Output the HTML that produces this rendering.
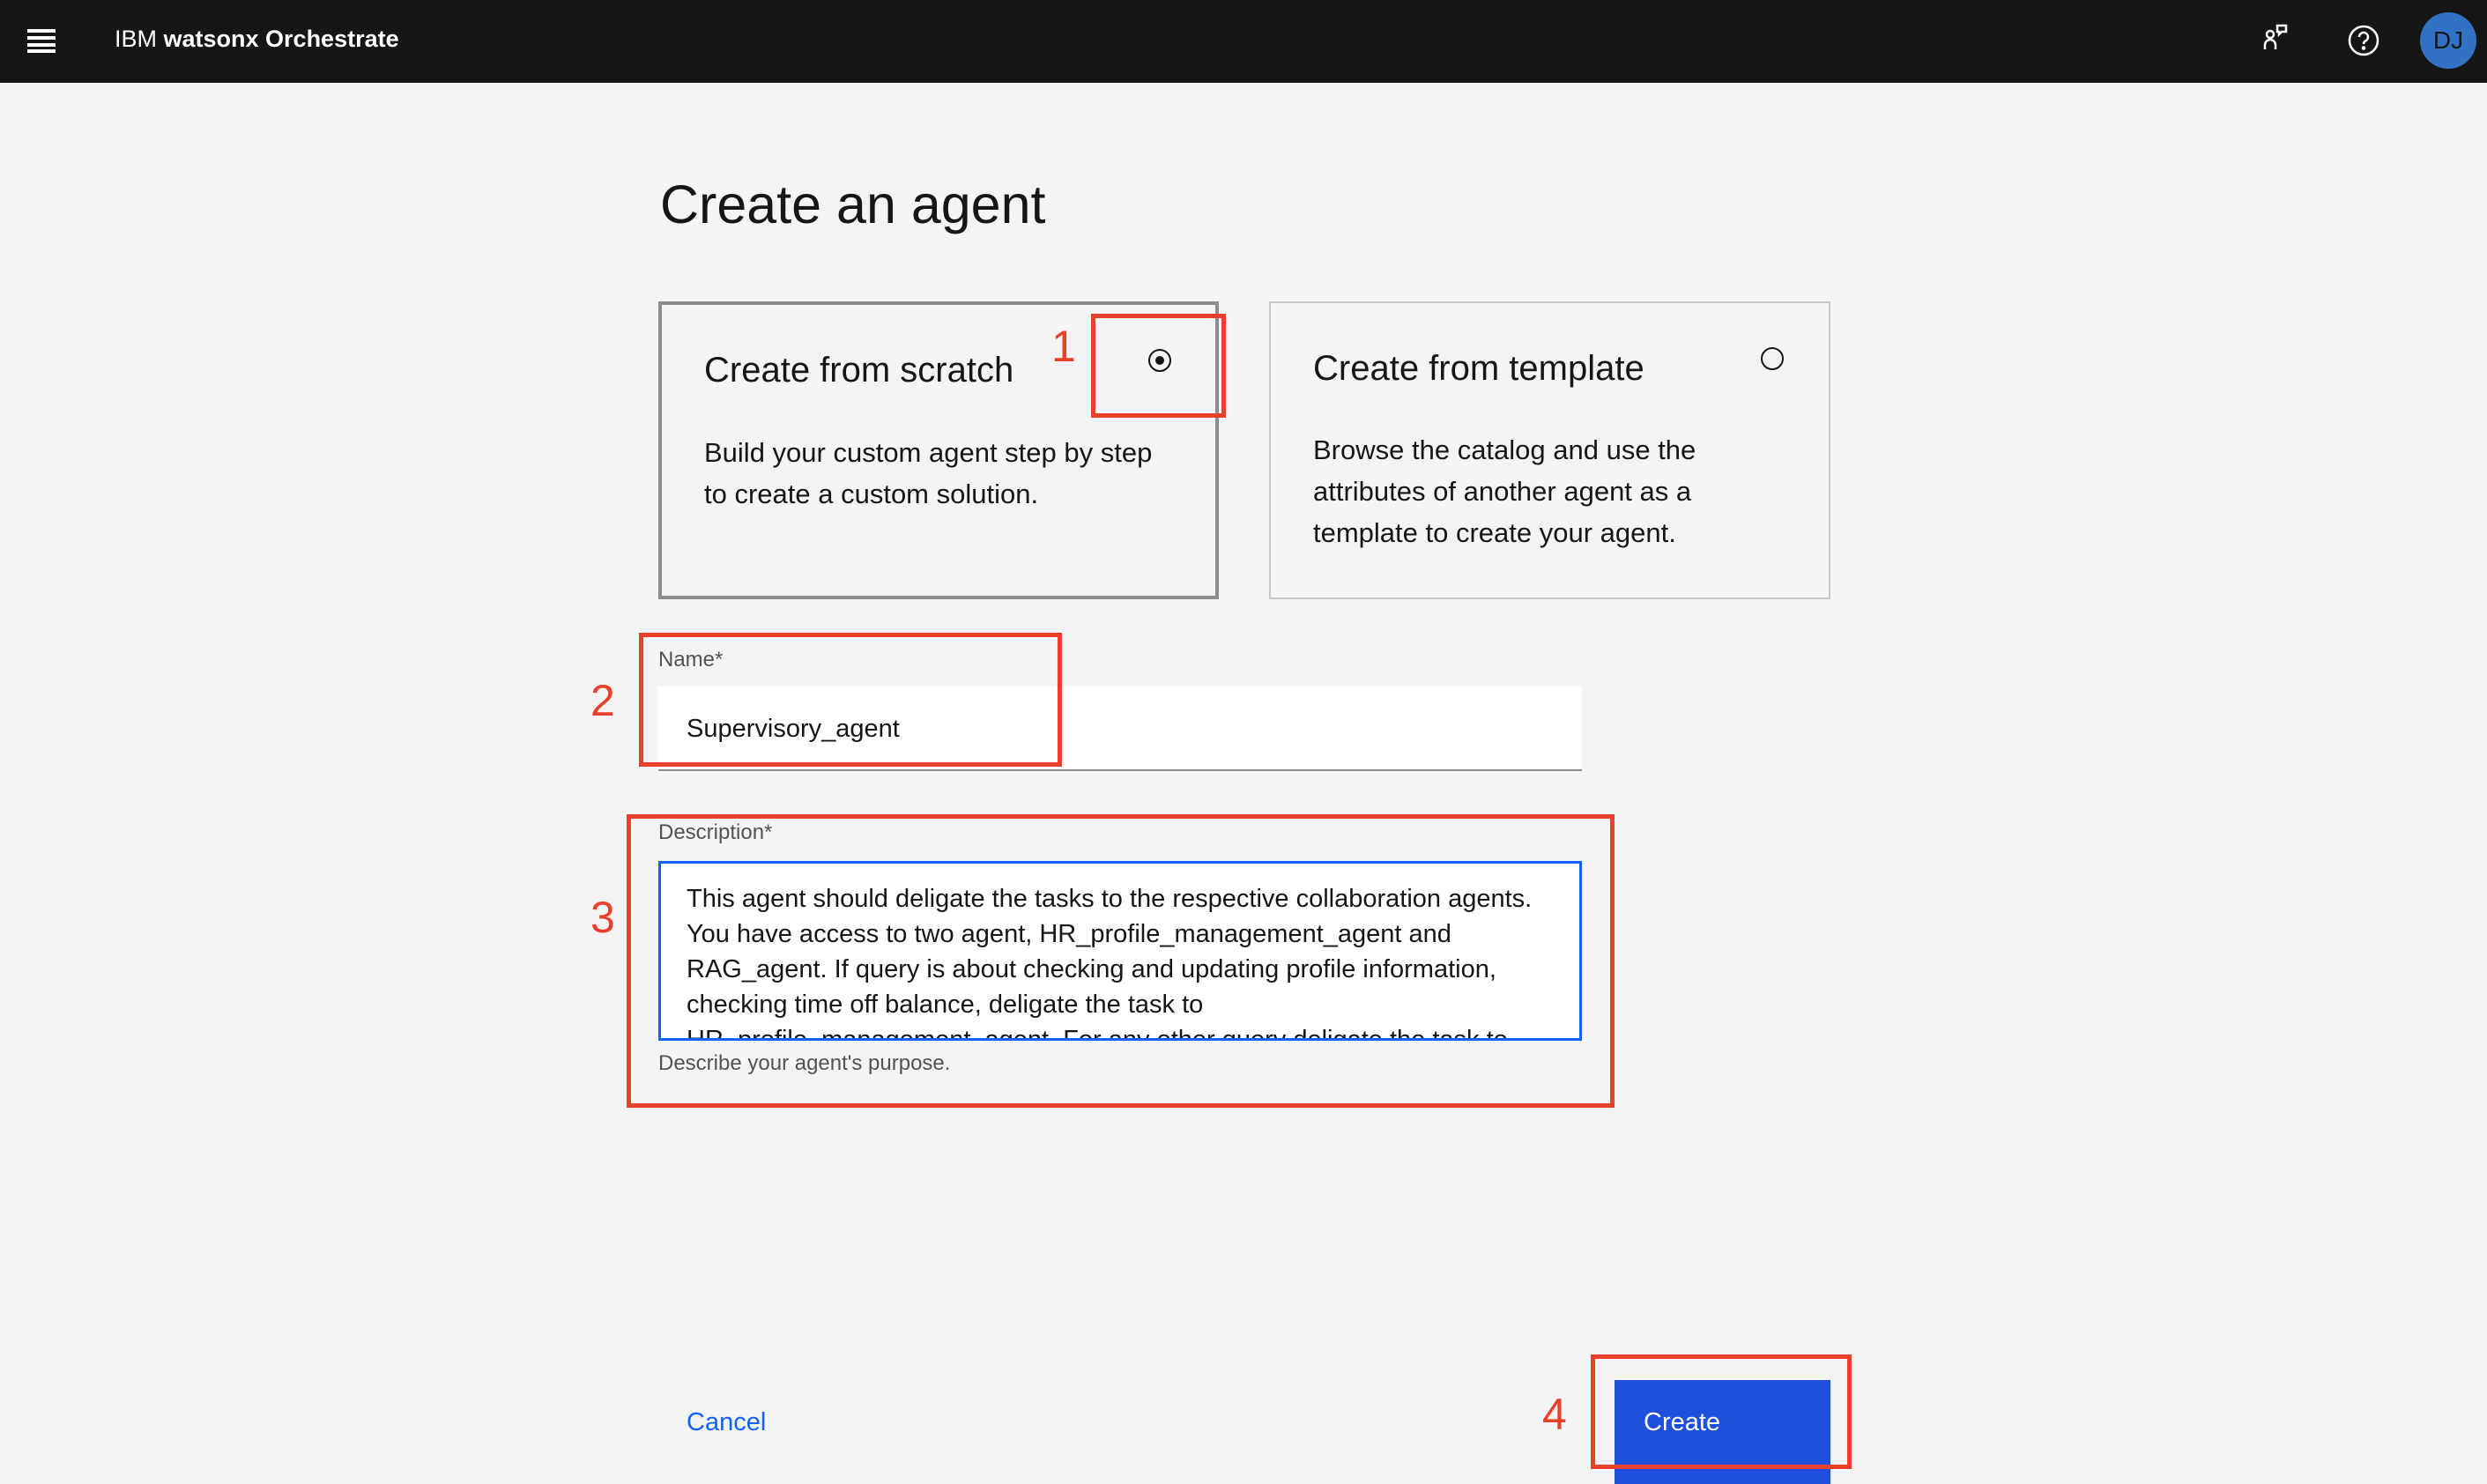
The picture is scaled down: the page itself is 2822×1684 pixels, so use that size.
<!DOCTYPE html>
<html><head><meta charset="utf-8"><style>
*{margin:0;padding:0;box-sizing:border-box}
body{width:2822px;height:1684px;background:#f4f4f4;font-family:"Liberation Sans",sans-serif;color:#161616;position:relative;overflow:hidden}
.a{position:absolute}
.hdr{left:0;top:0;width:2822px;height:94px;background:#161616}
.red{position:absolute;border:5px solid #e8402a}
.num{position:absolute;color:#e8402a;font-size:50px;line-height:1}
.t{white-space:nowrap}
</style></head><body>
<div class="a hdr"></div>
<div class="a" style="left:31px;top:33px;width:32px;height:4px;background:#fff"></div>
<div class="a" style="left:31px;top:41px;width:32px;height:4px;background:#fff"></div>
<div class="a" style="left:31px;top:49px;width:32px;height:4px;background:#fff"></div>
<div class="a" style="left:31px;top:56px;width:32px;height:4px;background:#fff"></div>
<div class="a t" style="left:130px;top:29px;font-size:27px;color:#fff">IBM <b>watsonx Orchestrate</b></div>
<svg class="a" style="left:2566px;top:26px" width="40" height="40" viewBox="0 0 40 40" fill="none" stroke="#fff" stroke-width="2.5">
<circle cx="10" cy="13" r="4"/><path d="M4 30v-5a6 6 0 0 1 12 0v5"/><path d="M18 3h10v7h-5l-3 3v-3h-2z"/></svg>
<svg class="a" style="left:2664px;top:28px" width="36" height="36" viewBox="0 0 36 36" fill="none" stroke="#fff" stroke-width="2.5">
<circle cx="18" cy="18" r="16"/><path d="M13 14a5 5 0 1 1 7 4.5c-1.5.8-2 1.8-2 3.5"/><circle cx="18" cy="26.5" r="1" fill="#fff"/></svg>
<div class="a" style="left:2746px;top:14px;width:64px;height:64px;border-radius:50%;background:#3272c4;color:#161616;font-size:28px;text-align:center;line-height:64px">DJ</div>

<div class="a t" style="left:749px;top:197px;font-size:61px;font-weight:300">Create an agent</div>

<div class="a" style="left:747px;top:342px;width:636px;height:338px;border:4px solid #8d8d8d"></div>
<div class="a t" style="left:799px;top:398px;font-size:40px">Create from scratch</div>
<div class="a" style="left:799px;top:490px;font-size:31px;line-height:47px">Build your custom agent step by step<br>to create a custom solution.</div>
<div class="a" style="left:1303px;top:396px;width:26px;height:26px;border:2.5px solid #161616;border-radius:50%"></div>
<div class="a" style="left:1311px;top:404px;width:10px;height:10px;background:#161616;border-radius:50%"></div>

<div class="a" style="left:1440px;top:342px;width:637px;height:338px;border:2px solid #c6c6c6"></div>
<div class="a t" style="left:1490px;top:396px;font-size:40px">Create from template</div>
<div class="a" style="left:1490px;top:487px;font-size:31px;line-height:47px">Browse the catalog and use the<br>attributes of another agent as a<br>template to create your agent.</div>
<div class="a" style="left:1998px;top:394px;width:26px;height:26px;border:2.5px solid #161616;border-radius:50%"></div>

<div class="a t" style="left:747px;top:735px;font-size:24px;color:#525252">Name*</div>
<div class="a" style="left:747px;top:779px;width:1048px;height:96px;background:#fff;border-bottom:2px solid #8d8d8d"></div>
<div class="a t" style="left:779px;top:811px;font-size:29px">Supervisory_agent</div>

<div class="a t" style="left:747px;top:931px;font-size:24px;color:#525252">Description*</div>
<div class="a" style="left:747px;top:977px;width:1048px;height:204px;background:#fff;border:3px solid #0f62fe;overflow:hidden">
<div style="padding:20px 0 0 29px;font-size:29px;line-height:40px;white-space:nowrap">This agent should deligate the tasks to the respective collaboration agents.<br>You have access to two agent, HR_profile_management_agent and<br>RAG_agent. If query is about checking and updating profile information,<br>checking time off balance, deligate the task to<br>HR_profile_management_agent. For any other query deligate the task to</div></div>
<div class="a t" style="left:747px;top:1193px;font-size:24px;color:#525252">Describe your agent's purpose.</div>

<div class="a t" style="left:779px;top:1598px;font-size:29px;color:#0f62fe">Cancel</div>
<div class="a" style="left:1832px;top:1566px;width:245px;height:118px;background:#1f4fdc"></div>
<div class="a t" style="left:1865px;top:1598px;font-size:29px;color:#fff">Create</div>

<div class="red" style="left:1238px;top:356px;width:153px;height:118px"></div>
<div class="num" style="left:1193px;top:368px">1</div>
<div class="red" style="left:725px;top:718px;width:480px;height:152px"></div>
<div class="num" style="left:670px;top:770px">2</div>
<div class="red" style="left:711px;top:924px;width:1121px;height:333px"></div>
<div class="num" style="left:670px;top:1016px">3</div>
<div class="red" style="left:1805px;top:1537px;width:296px;height:130px"></div>
<div class="num" style="left:1750px;top:1580px">4</div>
</body></html>
